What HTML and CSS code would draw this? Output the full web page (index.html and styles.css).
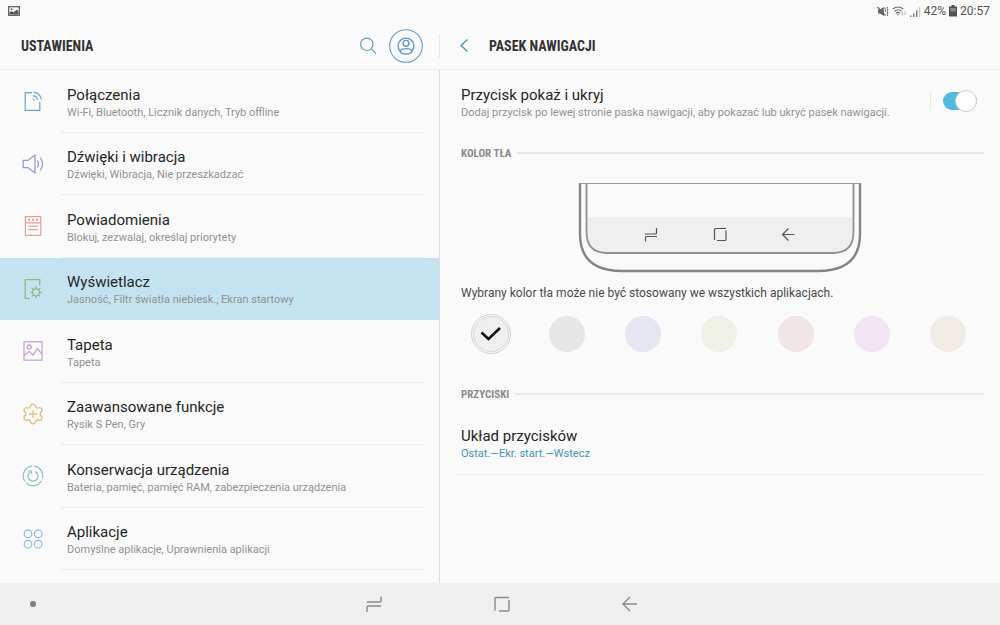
FILE: index.html
```html
<!DOCTYPE html>
<html lang="pl">
<head>
<meta charset="utf-8">
<meta name="viewport" content="width=device-width, initial-scale=1">
<title>Ustawienia</title>
<link rel="stylesheet" href="styles.css">
</head>
<body>
<div class="screen">
  <div class="status">
    <svg class="status-shot" width="12" height="10" viewBox="0 0 12 10"><rect x=".7" y=".7" width="10.6" height="8.6" fill="none" stroke="#555" stroke-width="1.2"/><path d="M1.5 8.5V6.5L3.5 5l2 1.5L9 3.5l1.5 2v3z" fill="#555"/><circle cx="3.6" cy="3.2" r=".9" fill="#555"/></svg>
    <div class="status-info">
      <svg width="12" height="11" viewBox="0 0 12 11" fill="#666" stroke="#666"><path d="M1 3.500h2L6.800 1v9L3 7.500H1z" stroke="none"/><path d="M.5 1l8 8.500" stroke-width="1.200"/><path d="M8 1.500v2.800l1 .9-1 1M10.800 1l-.7 1.500.8 1.400-.8 1.600.8 1.500-.8 1.600.7 1.400" fill="none"/></svg>
      <svg width="15" height="11" viewBox="0 0 15 11" fill="none" stroke="#666" stroke-width="1.1"><path d="M.7 3.200Q6-1.200 11.300 3.200M2.400 5.200Q6 2.300 9.600 5.200M4 7.200Q6 5.600 8 7.200"/><path d="M4.900 8.300h2.200L6 9.600z" fill="#666" stroke="none"/><path d="M10.400 6v3.500M13 5.500V9" stroke="#bbb"/></svg>
      <svg width="11" height="11" viewBox="0 0 11 11"><path d="M0 9.500h1.400V11H0zM3 7.500h1.400V11H3zM6 4.500h1.400V11H6z" fill="#777"/><path d="M9 1h1.300v10H9z" fill="#ccc"/></svg>
      <span>42%</span>
      <svg width="8" height="12" viewBox="0 0 8 12"><path d="M2.500 0h3v1.400H8V11.500H0V1.400h2.500z" fill="#505050"/><path d="M1.300 3h5.400v3.500H1.300z" fill="#8a8a8a"/></svg>
      <span>20:57</span>
    </div>
  </div>

  <div class="panes">
    <div class="pane pane-list">
      <header class="bar bar-list">
        <h1 class="bar-title">USTAWIENIA</h1>
        <button class="icon-button" type="button" aria-label="Szukaj"><svg width="18" height="18" viewBox="0 0 18 18" fill="none" stroke="#6ba3ba" stroke-width="1.200"><circle cx="7.800" cy="7.300" r="6.200"/><path d="M12.300 11.800L17 16.500"/></svg></button>
        <button class="icon-button account" type="button" aria-label="Konto"><svg width="34" height="34" viewBox="0 0 34 34" fill="none" stroke="#5f9dc8" stroke-width="1.100"><circle cx="17" cy="17" r="16.300"/><g stroke-width="1.400"><path d="M11 22.200A7.900 7.900 0 1 1 23 22.200"/><circle cx="17" cy="14.300" r="2.900"/><ellipse cx="17" cy="22.300" rx="5.700" ry="2.700"/></g></svg></button>
      </header>
      <nav class="menu">
        <a class="item" href="#polaczenia"><svg class="item-icon" width="22" height="22" viewBox="0 0 22 22" fill="none" stroke="#6ba6c6" stroke-width="1.200"><path d="M10 2.600H3.200V20.400H17.800V12"/><path d="M11.500 2.200Q18.200 3 19.300 9.500M11 5.700Q14.800 6.200 15.800 10M10.800 9Q12 9.200 12.300 10.500"/></svg><span class="item-text"><span class="title">Połączenia</span><span class="sub">Wi-Fi, Bluetooth, Licznik danych, Tryb offline</span></span></a>
        <a class="item" href="#dzwieki"><svg class="item-icon" width="22" height="22" viewBox="0 0 22 22" fill="none" stroke="#8f9ace" stroke-width="1.200"><path d="M1.200 7.400H6L13 2v18L6 14.600H1.200z"/><path d="M15.400 7.500Q17.400 11 15.400 14.500M18.200 4.700Q23 11 18.200 17.300"/></svg><span class="item-text"><span class="title">Dźwięki i wibracja</span><span class="sub">Dźwięki, Wibracja, Nie przeszkadzać</span></span></a>
        <a class="item" href="#powiadomienia"><svg class="item-icon" width="22" height="22" viewBox="0 0 22 22" fill="none" stroke="#e59f9a" stroke-width="1.200"><rect x="3.400" y="1.600" width="15.400" height="18.800"/><path d="M3.400 7.800h15.400M6.300 11.200h9.500M6.300 14.600h9.500"/><path d="M6 4.700h2M10 4.700h2M14 4.700h2" stroke-width="2"/></svg><span class="item-text"><span class="title">Powiadomienia</span><span class="sub">Blokuj, zezwalaj, określaj priorytety</span></span></a>
        <a class="item selected" href="#wyswietlacz" aria-current="page"><svg class="item-icon" width="22" height="22" viewBox="0 0 22 22" fill="none" stroke="#88bd84" stroke-width="1.300"><path d="M7.500 20.400H3.200V1.600H17.800V7"/><circle cx="14" cy="14.300" r="3.500"/><path d="M14 8.200v2.600M14 17.800v2.600M7.900 14.300h2.600M17.500 14.300h2.600M9.700 10l1.800 1.800M16.500 16.800l1.800 1.800M18.300 10l-1.800 1.800M11.500 16.800l-1.800 1.800"/></svg><span class="item-text"><span class="title">Wyświetlacz</span><span class="sub">Jasność, Filtr światła niebiesk., Ekran startowy</span></span></a>
        <a class="item" href="#tapeta"><svg class="item-icon" width="22" height="22" viewBox="0 0 22 22" fill="none" stroke="#c4a0d0" stroke-width="1.200"><rect x="2" y="1.800" width="18" height="18.400"/><circle cx="7.200" cy="7" r="2.100"/><path d="M2 15.800L7.200 11.400 11 15 15.400 8.600 20 14.200"/></svg><span class="item-text"><span class="title">Tapeta</span><span class="sub">Tapeta</span></span></a>
        <a class="item" href="#funkcje"><svg class="item-icon" width="22" height="22" viewBox="0 0 22 22" fill="none" stroke="#e5c07a" stroke-width="1.300"><path d="M8.300 4.200C8.600 0 13.400 0 13.700 4.200L15.400 5.200C19.300 3.300 21.700 7.500 18.300 9.900V12.100C21.700 14.500 19.300 18.700 15.400 16.800L13.700 17.800C13.400 22 8.600 22 8.300 17.800L6.600 16.800C2.700 18.700.3 14.500 3.700 12.100V9.900C.3 7.500 2.700 3.300 6.600 5.200z" stroke-linejoin="round"/><path d="M11 7v8M7 11h8"/></svg><span class="item-text"><span class="title">Zaawansowane funkcje</span><span class="sub">Rysik S Pen, Gry</span></span></a>
        <a class="item" href="#konserwacja"><svg class="item-icon" width="22" height="22" viewBox="0 0 22 22" fill="none" stroke="#8ac2be" stroke-width="1.200"><path d="M12.500 1.200A9.800 9.800 0 0 1 20.400 13.500M19.500 15.700A9.800 9.800 0 0 1 4 17.800M2.700 16.200A9.800 9.800 0 0 1 10 1.200"/><path d="M13.200 6.600A5 5 0 1 1 8.300 6.900M6.300 6h3.200v3.300"/></svg><span class="item-text"><span class="title">Konserwacja urządzenia</span><span class="sub">Bateria, pamięć, pamięć RAM, zabezpieczenia urządzenia</span></span></a>
        <a class="item" href="#aplikacje"><svg class="item-icon" width="22" height="22" viewBox="0 0 22 22" fill="none" stroke="#8cbdd4" stroke-width="1.200"><circle cx="6" cy="5.900" r="3.800"/><circle cx="16.200" cy="5.900" r="3.800"/><circle cx="6" cy="16.200" r="3.800"/><circle cx="16.200" cy="16.200" r="3.800"/></svg><span class="item-text"><span class="title">Aplikacje</span><span class="sub">Domyślne aplikacje, Uprawnienia aplikacji</span></span></a>
      </nav>
    </div>

    <main class="pane pane-detail">
      <header class="bar bar-detail">
        <button class="icon-button back" type="button" aria-label="Wstecz"><svg width="10" height="16" viewBox="0 0 10 16" fill="none" stroke="#4f9ab5" stroke-width="1.400"><path d="M8.500 1.500L2 7.500l6.500 6"/></svg></button>
        <h2 class="bar-title">PASEK NAWIGACJI</h2>
      </header>
      <div class="detail">
        <div class="toggle-row">
          <label class="toggle-text" for="show-hide"><span class="title">Przycisk pokaż i ukryj</span><span class="sub">Dodaj przycisk po lewej stronie paska nawigacji, aby pokazać lub ukryć pasek nawigacji.</span></label>
          <div class="toggle-box"><input class="toggle" id="show-hide" type="checkbox" role="switch" checked></div>
        </div>
        <h3 class="section">KOLOR TŁA</h3>
        <svg class="preview" width="284" height="92" viewBox="0 0 284 92" fill="none">
          <path d="M9 34H275V50Q275 70 255 70H29Q9 70 9 50z" fill="#efefef"/>
          <path d="M2 .5V51Q2 88 44 88H240Q282 88 282 51V.5" stroke="#858585" stroke-width="2.400"/>
          <path d="M8.500 .5V49Q8.500 70 29 70H255Q275.500 70 275.500 49V.5" stroke="#909090" stroke-width="1.800"/>
          <path d="M1 .5H283" stroke="#999"/>
          <g stroke="#555" stroke-width="1.200" stroke-linejoin="round"><path d="M78.500 45v5q0 1-1 1H67M67.500 58.500v-4q0-1 1-1H79"/><path d="M136.500 57V46.500q0-1 1-1H148M148 47.500V56.500q0 1-1 1H139"/><path d="M216.500 51.500H205M210.500 45.500L204.500 51.500L210.500 57.500"/></g>
        </svg>
        <p class="note">Wybrany kolor tła może nie być stosowany we wszystkich aplikacjach.</p>
        <div class="swatches" role="radiogroup" aria-label="Kolor tła">
          <label class="swatch"><input class="swatch-input" type="radio" name="bg" aria-label="Jasny" checked><svg class="check" width="22" height="16" viewBox="0 0 22 16" fill="none" stroke="#111" stroke-width="2.600"><path d="M1.500 6.500L8.500 13 20 2"/></svg></label>
          <label class="swatch"><input class="swatch-input grey" type="radio" name="bg" aria-label="Szary"></label>
          <label class="swatch"><input class="swatch-input blue" type="radio" name="bg" aria-label="Niebieski"></label>
          <label class="swatch"><input class="swatch-input green" type="radio" name="bg" aria-label="Zielony"></label>
          <label class="swatch"><input class="swatch-input pink" type="radio" name="bg" aria-label="Różowy"></label>
          <label class="swatch"><input class="swatch-input violet" type="radio" name="bg" aria-label="Fioletowy"></label>
          <label class="swatch"><input class="swatch-input beige" type="radio" name="bg" aria-label="Beżowy"></label>
        </div>
        <h3 class="section">PRZYCISKI</h3>
        <a class="layout-row" href="#uklad"><span class="title">Układ przycisków</span><span class="sub sub-active">Ostat.—Ekr. start.—Wstecz</span></a>
      </div>
    </main>
  </div>

  <footer class="navbar">
    <button class="icon-button dot-button" type="button" aria-label="Pokaż i ukryj"><span class="dot"></span></button>
    <div class="nav-keys">
      <button class="icon-button" type="button" aria-label="Ostatnie"><svg width="18" height="18" viewBox="0 0 18 18" fill="none" stroke="#8a8a8a" stroke-width="1.400"><path d="M16 1.500v4.500q0 1-1 1H2M2 17v-5q0-1 1-1H16"/></svg></button>
      <button class="icon-button" type="button" aria-label="Ekran startowy"><svg width="18" height="18" viewBox="0 0 18 18" fill="none" stroke="#8a8a8a" stroke-width="1.400"><path d="M2 15.500V3.500q0-1 1-1H16M16 5V15q0 1-1 1H6"/></svg></button>
      <button class="icon-button" type="button" aria-label="Wstecz"><svg width="18" height="18" viewBox="0 0 18 18" fill="none" stroke="#8a8a8a" stroke-width="1.400"><path d="M16 9H2.500M9 2L2 9l7 7"/></svg></button>
    </div>
  </footer>
</div>
</body>
</html>
```

FILE: styles.css
```css
* { box-sizing: border-box; }

body {
  margin: 0;
  background: #fafafa;
  color: #252525;
  font-family: Roboto, "Noto Sans", sans-serif;
}

h1, h2, h3, p { margin: 0; }
a { color: inherit; text-decoration: none; }
svg { display: block; flex: none; }

.screen {
  display: flex;
  flex-direction: column;
  min-height: 100vh;
}

.status {
  display: flex;
  justify-content: space-between;
  align-items: center;
  height: 22px;
  padding: 0 10px 0 8px;
  color: #555;
  font-size: 12px;
}

.status-info {
  display: flex;
  align-items: center;
  gap: 3px;
}

.panes {
  display: grid;
  grid-template-columns: 44fr 56fr;
  flex: 1;
}

.pane {
  display: flex;
  flex-direction: column;
  min-width: 0;
}

.bar {
  display: flex;
  align-items: center;
  height: 48px;
  padding: 0 17px 0 21px;
  border-bottom: 1px solid #efefef;
}

.bar-list {
  background: linear-gradient(#e8e8e8, #e8e8e8) right center / 1px 24px no-repeat;
}

.bar-title {
  flex: 1;
  color: #333;
  font-family: "Roboto Condensed", Roboto, sans-serif;
  font-size: 14px;
  line-height: 20px;
  font-weight: 700;
}

.bar-detail { padding-left: 19px; }

.icon-button {
  display: flex;
  align-items: center;
  justify-content: center;
  padding: 0;
  border: 0;
  background: none;
}

.account { margin-left: 12px; }
.back { margin-right: 20px; }

.menu {
  display: grid;
  grid-auto-rows: 1fr;
  flex: 1;
  padding-bottom: 13px;
  border-right: 1px solid #dedede;
}

.item {
  display: flex;
  padding-left: 22px;
}

.item-icon {
  align-self: center;
  margin-right: 17px;
}

.item-text {
  display: flex;
  flex: 1;
  flex-direction: column;
  justify-content: center;
  margin-right: 15px;
  padding: 4px 0 0 6px;
  border-bottom: 1px solid #ededed;
}

.selected { background: #c4e3f0; }
.selected .item-text { border-color: transparent; }

.title {
  display: block;
  font-size: 15px;
  line-height: 20px;
}

.sub {
  display: block;
  color: #929292;
  font-size: 11px;
  line-height: 16px;
}

.sub-active { color: #3f97b4; }

.detail { padding: 0 16px 0 15px; }

.toggle-row {
  display: flex;
  align-items: center;
  height: 62px;
  padding-left: 6px;
}

.toggle-text {
  flex: 1;
  padding-top: 4px;
}

.toggle-box {
  padding: 0 7px 0 12px;
  border-left: 1px solid #e8e8e8;
}

.toggle {
  display: flex;
  justify-content: flex-end;
  align-items: center;
  appearance: none;
  width: 34px;
  height: 18px;
  margin: 0;
  border-radius: 9px;
  background: #4fb9df;
}

.toggle::before {
  content: "";
  width: 20px;
  height: 20px;
  border: 1px solid #cfcfcf;
  border-radius: 50%;
  background: #fff;
}

.toggle:not(:checked) {
  justify-content: flex-start;
  background: #ccc;
}

.section {
  display: flex;
  align-items: center;
  gap: 6px;
  height: 42px;
  padding-left: 6px;
  color: #8a8a8a;
  font-family: "Roboto Condensed", Roboto, sans-serif;
  font-size: 11px;
  font-weight: 700;
}

.section::after {
  content: "";
  flex: 1;
  height: 2px;
  background: #e8e8e8;
}

.preview {
  margin: 9px auto 8px;
}

.note {
  padding-left: 6px;
  color: #4a4a4a;
  font-size: 12px;
  line-height: 20px;
}

.swatches {
  display: flex;
  justify-content: space-between;
  margin: 11px 16px 19px;
}

.swatch {
  display: grid;
  place-items: center;
}

.swatch-input,
.check { grid-area: 1 / 1; }

.check { z-index: 1; }

.swatch-input {
  appearance: none;
  width: 36px;
  height: 36px;
  margin: 2px;
  border-radius: 50%;
  background: #efefef;
}

.swatch-input:checked {
  border: 1px solid #d6d6d6;
  outline: 1px solid #d0d0d0;
  outline-offset: 1px;
}

.grey { background: #e6e6e6; }
.blue { background: #e6e6f2; }
.green { background: #f0f1e6; }
.pink { background: #f1e6e6; }
.violet { background: #f0e5f0; }
.beige { background: #f1ebe6; }

.layout-row {
  display: block;
  padding: 11px 6px 12px;
  border-bottom: 1px solid #ededed;
}

.navbar {
  display: grid;
  grid-template-columns: 1fr auto 1fr;
  align-items: center;
  height: 42px;
  padding: 0 27px 0 30px;
  background: #efefef;
}

.dot-button { justify-self: start; }

.dot {
  width: 6px;
  height: 6px;
  border-radius: 50%;
  background: #7d7d7d;
}

.nav-keys {
  display: flex;
  gap: 110px;
}
```
